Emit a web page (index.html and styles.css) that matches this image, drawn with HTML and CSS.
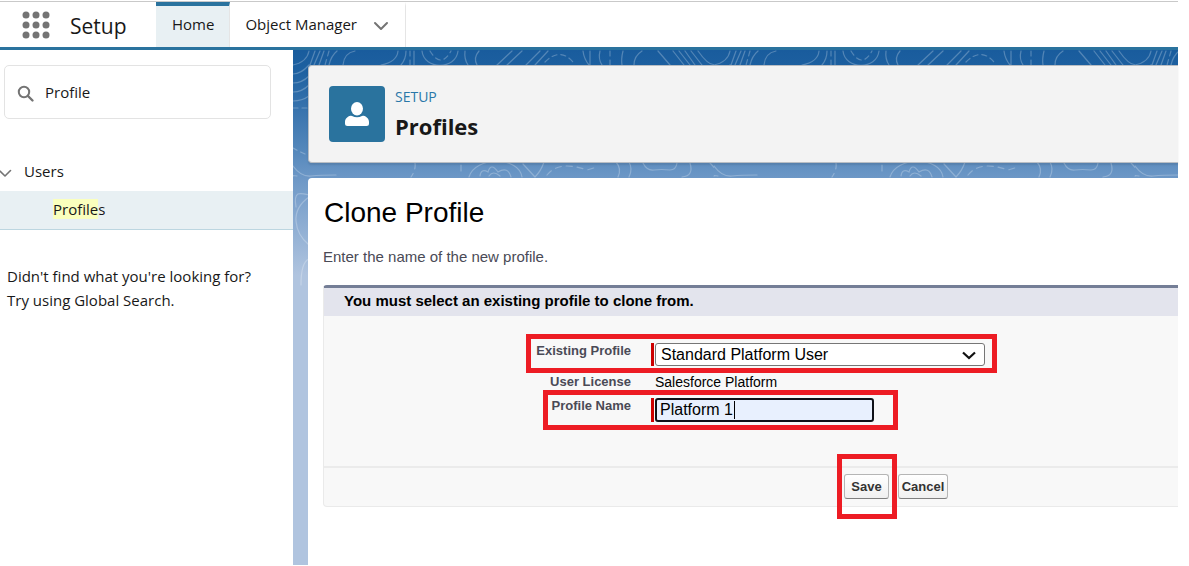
FILE: index.html
```
<!DOCTYPE html>
<html lang="en">
<head>
<meta charset="utf-8">
<title>Profiles | Setup</title>
<link rel="stylesheet" href="styles.css">
</head>
<body>
<div class="app">
  <header class="topbar">
    <button class="waffle" type="button" aria-label="App Launcher">
      <svg width="28" height="28" viewBox="0 0 28 28" fill="#747474">
        <circle cx="4" cy="4" r="3.5"/><circle cx="14" cy="4" r="3.5"/><circle cx="24" cy="4" r="3.5"/>
        <circle cx="4" cy="14" r="3.5"/><circle cx="14" cy="14" r="3.5"/><circle cx="24" cy="14" r="3.5"/>
        <circle cx="4" cy="24" r="3.5"/><circle cx="14" cy="24" r="3.5"/><circle cx="24" cy="24" r="3.5"/>
      </svg>
    </button>
    <span class="app-name">Setup</span>
    <nav class="tabs">
      <a class="tab tab-active" href="#">Home</a>
      <a class="tab tab-menu" href="#">Object Manager
        <svg width="16" height="10" viewBox="0 0 16 10" fill="none" stroke="#747474" stroke-width="2" stroke-linecap="round" stroke-linejoin="round"><path d="M2 2l6 6 6-6"/></svg>
      </a>
    </nav>
  </header>

  <div class="columns">
    <aside class="sidebar">
      <label class="search">
        <svg width="18" height="18" viewBox="0 0 18 18" fill="none" stroke="#747474" stroke-width="2" stroke-linecap="round"><circle cx="7" cy="7" r="5.2"/><path d="M11 11l4.500 4.500" stroke-width="2.4"/></svg>
        <input class="search-input" type="text" value="Profile" aria-label="Quick Find">
      </label>
      <a class="tree-parent" href="#">
        <svg width="12" height="9" viewBox="0 0 12 9" fill="none" stroke="#747474" stroke-width="1.6" stroke-linecap="round" stroke-linejoin="round"><path d="M0 2l5 5 5.500-5.500"/></svg>
        Users
      </a>
      <a class="tree-item" href="#"><span><mark>Profile</mark>s</span></a>
      <p class="hint">Didn't find what you're looking for?<br>Try using Global Search.</p>
    </aside>

    <main class="main">
      <svg class="topo" aria-hidden="true">
        <defs>
          <pattern id="contours" width="421" height="260" patternUnits="userSpaceOnUse">
            <g fill="none" stroke="#ffffff" stroke-opacity=".25" stroke-width="1.200" stroke-linecap="round">
              <path d="M16 1Q14 12 0 15M22 1L17 15M27 1L21 15M31 1L26 15M50 15Q51 3 62 1M44 1Q38 6 36 15"/>
              <path d="M105 1Q104 12 88 15M113 1Q113 9 108 15M121 1V15M129 1C131 20 163 20 165 1M172 1Q171 9 175 15M186 1Q180 8 184 15"/>
              <path d="M219 1L204 15M229 1L214 15M247 1L233 15M255 1L242 15M290 1Q291 9 296 15M297 1V15M307 1Q305 9 309 15M330 1Q328 9 329 15M349 1Q341 6 341 15"/>
              <path d="M365 1Q371 8 377 15M380 1L391 15M386 1L397 15M392 1L402 15M398 1L409 15M405 1Q417 18 424 14"/>
              <path stroke-dasharray="5 4" d="M36 1L32 15M117 1V15M137 1Q148 19 158 1M252 12Q267 -3 280 12M317 1V15"/>
            </g>
            <g fill="none" stroke="#ffffff" stroke-opacity=".25" stroke-width="1.200" stroke-linecap="round">
              <path stroke-dasharray="5 4" d="M0 98Q5 101 12 104"/>
              <path d="M0 116Q8 127 18 126T43 125M176 127C182 106 226 106 229 127M187 126Q188 118 195 122Q198 112 205 122Q215 116 218 127M196 126Q200 120 207 126M230 114L242 127M251 112Q248 121 242 127"/>
              <path stroke-dasharray="6 5" d="M122 113Q123 120 118 127M168 115V124M254 125Q266 110 294 120L304 117M544 113L538 126"/>
              <path d="M323 112Q329 119 325 127M336 112Q340 119 336 127M350 113Q354 121 361 120T377 120Q383 120 384 113M397 113Q401 126 389 127"/>
              <path d="M417 113Q430 126 421 126M0 126Q-1 125 4 126"/>
              <path d="M3 157C0 140 8 143 16 145M16 147Q2 157 3 171T16 195M16 209Q8 212 8 235"/>
              <path d="M0 24Q8 24 16 15M0 33Q9 33 16 26M0 42Q9 42 16 35M0 51Q9 51 16 46"/>
              <path stroke-dasharray="5 4" d="M0 58H16"/>
            </g>
          </pattern>
        </defs>
        <rect width="100%" height="260" fill="url(#contours)"/>
      </svg>

      <section class="page-header">
        <span class="page-icon">
          <svg width="24" height="24" viewBox="0 0 24 24" fill="#fff"><ellipse cx="12" cy="6.700" rx="6" ry="6.700"/><path d="M5.500 13.800C2.500 14.500 0 17 0 20V21.500Q0 24 2.500 24H21.500Q24 24 24 21.500V20C24 17 21.500 14.500 18.500 13.800Q17.600 13.600 17 14Q12 16.500 7 14Q6.400 13.600 5.500 13.800Z"/></svg>
        </span>
        <div>
          <p class="eyebrow">SETUP</p>
          <h1 class="page-title">Profiles</h1>
        </div>
      </section>

      <section class="content">
        <h2 class="content-title">Clone Profile</h2>
        <p class="intro">Enter the name of the new profile.</p>
        <form class="block">
          <h3 class="block-head">You must select an existing profile to clone from.</h3>
          <div class="fields">
            <div class="row">
              <label class="label" for="existing">Existing Profile</label>
              <div class="required">
                <select class="select" id="existing"><option>Standard Platform User</option></select>
                <svg class="select-arrow" width="14" height="9" viewBox="0 0 14 9" fill="none" stroke="#111" stroke-width="2.2"><path d="M1 1.500l6 5.500 6-5.500"/></svg>
              </div>
              <span class="callout callout-existing"></span>
            </div>
            <div class="row">
              <span class="label">User License</span>
              <span class="value">Salesforce Platform</span>
            </div>
            <div class="row">
              <label class="label" for="name">Profile Name</label>
              <div class="required"><input class="text" id="name" type="text" value="Platform 1"><span class="caret"></span></div>
              <span class="callout callout-name"></span>
            </div>
          </div>
          <div class="actions">
            <span class="save"><button class="btn" type="button">Save</button><span class="callout callout-save"></span></span>
            <button class="btn btn-cancel" type="button">Cancel</button>
          </div>
        </form>
      </section>
    </main>
  </div>
</div>
</body>
</html>
```
FILE: styles.css
```
* { box-sizing: border-box; }
body {
  margin: 0;
  background: #fff;
  color: #181818;
  font-family: "Open Sans", "Noto Sans", sans-serif;
  font-size: 15px;
}
h1, h2, h3, p { margin: 0; font-weight: 400; }
a { color: inherit; text-decoration: none; }

.app {
  display: flex;
  flex-direction: column;
  height: 100vh;
  padding: 1px 11px 1px 0;
}

.topbar {
  display: flex;
  height: 49px;
  flex: none;
  border-top: 1px solid #c9c9c9;
  border-bottom: 3px solid #2a739e;
}
.waffle {
  display: flex;
  align-items: center;
  padding: 0 0 0 22px;
  border: 0;
  background: none;
}
.app-name {
  width: 106px;
  padding-left: 20px;
  font-size: 21px;
  line-height: 48px;
}
.tabs { display: flex; }
.tab {
  display: flex;
  align-items: center;
  gap: 16px;
  padding: 0 16px 6px;
  border-top: 4px solid transparent;
  border-right: 1px solid #e5e5e5;
}
.tab-active {
  padding-right: 15px;
  border-top-color: #2a739e;
  background: #e8f0f3;
}
.tab-menu { padding-left: 15px; }
.tab-menu svg { margin-top: 4px; }

.columns { display: flex; flex: 1; min-height: 0; }

.sidebar { width: 293px; flex: none; padding-top: 15px; }
.search {
  display: flex;
  align-items: center;
  gap: 10px;
  height: 54px;
  margin: 0 22px 0 4px;
  padding: 0 12px;
  border: 1px solid #e3e3e3;
  border-radius: 5px;
}
.search svg { flex: none; margin-top: 3px; }
.search-input {
  width: 100%;
  padding: 0;
  border: 0;
  outline: 0;
  background: none;
  color: inherit;
  font: inherit;
}
.tree-parent {
  display: flex;
  align-items: center;
  gap: 12px;
  height: 40px;
  margin-top: 32px;
}
.tree-parent svg { margin-top: 4px; }
.tree-item {
  display: flex;
  align-items: center;
  height: 39px;
  padding-left: 53px;
  padding-bottom: 3px;
  border-bottom: 1px solid #bcd6e0;
  background: #e8f0f3;
}
.tree-item mark { background: #faffbd; color: inherit; }
.hint { padding: 34px 0 0 7px; line-height: 24px; }

.main {
  position: relative;
  display: flex;
  flex: 1;
  flex-direction: column;
  gap: 15px;
  min-width: 0;
  padding: 15px 0 0 15px;
  background: linear-gradient(#195c9d 0, #1d60a0 20px, #5487bb 100px, #6c97c6 127px, #b0c4df 225px);
}
.topo {
  position: absolute;
  inset: 0;
  width: 100%;
  height: 100%;
}
.page-header {
  position: relative;
  display: flex;
  gap: 10px;
  height: 98px;
  flex: none;
  padding: 20px;
  border: 1px solid #b9bec4;
  border-right: 0;
  border-radius: 4px 0 0 4px;
  background: #f3f3f3;
  box-shadow: 0 2px 2px rgba(0, 0, 0, .1);
}
.page-icon {
  display: flex;
  align-items: center;
  justify-content: center;
  width: 56px;
  height: 56px;
  border-radius: 4px;
  background: #2a739e;
}
.eyebrow { color: #2a77a8; font-size: 14px; line-height: 22px; }
.page-title { font-size: 22px; font-weight: 700; line-height: 36px; }

.content {
  position: relative;
  flex: 1;
  padding: 19px 0 0 15px;
  border-radius: 4px 0 0 0;
  background: #fff;
  font-family: "Liberation Sans", Arial, sans-serif;
}
.content-title { padding-left: 1px; color: #000; font-size: 28px; line-height: 32px; }
.intro { padding-top: 18px; color: #4a4a56; line-height: 20px; }
.block {
  margin-top: 18px;
  border: 1px solid #eaeaea;
  border-top: 3px solid #747e96;
  border-right: 0;
  border-radius: 4px 0 0 4px;
  background: #f8f8f8;
}
.block-head {
  padding: 0 0 2px 20px;
  background: #e3e4ed;
  color: #000;
  font-size: 15px;
  font-weight: 700;
  line-height: 26px;
}
.fields {
  display: flex;
  flex-direction: column;
  gap: 8px;
  padding: 27px 0 44px;
}
.row {
  position: relative;
  display: grid;
  grid-template-columns: 307px 1fr;
  column-gap: 20px;
}
.label {
  color: #4a4a56;
  font-size: 13px;
  font-weight: 700;
  line-height: 16px;
  text-align: right;
}
.value { padding-left: 4px; color: #000; font-size: 14px; line-height: 16px; }
.required {
  position: relative;
  justify-self: start;
  display: flex;
  padding-left: 1px;
  border-left: 3px solid #c00;
}
.select {
  width: 330px;
  height: 23px;
  padding: 0 5px;
  border: 1px solid #767676;
  border-radius: 3px;
  appearance: none;
  background: #fff;
  color: #000;
  font: 16px "Liberation Sans", Arial, sans-serif;
}
.select-arrow {
  position: absolute;
  top: 8px;
  right: 9px;
  pointer-events: none;
}
.text {
  width: 219px;
  height: 24px;
  padding: 0 3px;
  border: 2px solid #101218;
  border-radius: 3px;
  outline: 0;
  background: #e8f0fe;
  color: #000;
  font: 16px "Liberation Sans", Arial, sans-serif;
}
.caret {
  position: absolute;
  top: 3px;
  left: 80px;
  width: 1px;
  height: 18px;
  background: #000;
}
.actions {
  display: flex;
  gap: 9px;
  padding: 6px 0 7px 520px;
  border-top: 2px solid #ebebeb;
}
.save { position: relative; display: flex; }
.btn {
  width: 45px;
  height: 25px;
  padding: 0;
  border: 1px solid #b5b5b5;
  border-bottom-color: #7f7f7f;
  border-radius: 3px;
  background: linear-gradient(#fff, #f0f0f0);
  color: #333;
  font: 700 13px "Liberation Sans", Arial, sans-serif;
}
.btn-cancel { width: 50px; }

/* Red highlight frames laid over the form */
.callout {
  position: absolute;
  border: 5px solid #ed1c24;
  pointer-events: none;
}
.callout-existing { top: -9px; left: 202px; width: 471px; height: 39px; }
.callout-name { top: -8px; left: 219px; width: 355px; height: 40px; }
.callout-save { top: -20px; left: -7px; width: 60px; height: 65px; }
```
